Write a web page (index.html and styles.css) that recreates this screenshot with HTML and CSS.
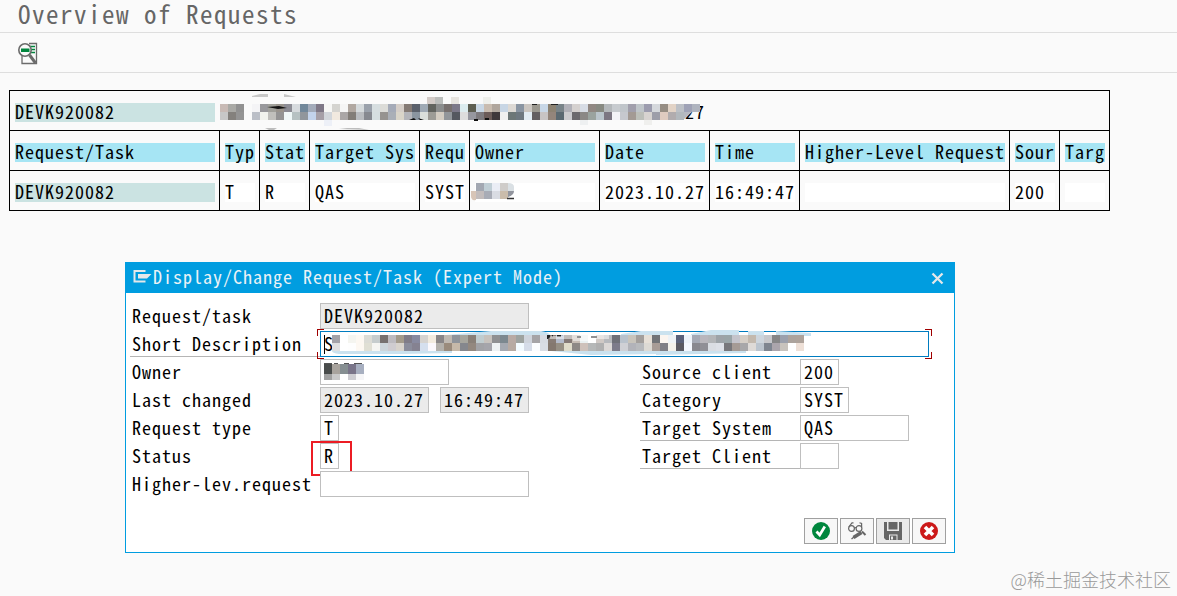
FILE: index.html
```html
<!DOCTYPE html>
<html lang="en">
<head>
    <meta charset="UTF-8">
    <meta name="viewport" content="width=device-width, initial-scale=1.0">
    <title>Overview of Requests</title>
    <link rel="stylesheet" href="styles.css">
</head>
<body>
    <header class="page-title">Overview of Requests</header>

    <div class="toolbar">
        <svg class="detail-icon" width="22" height="24" viewBox="0 0 22 24">
            <path d="M12 2.500H19.500V22.500H5V14" fill="none" stroke="#6b6b6b" stroke-width="1.300"/>
            <path d="M12 5.500h6M13 8.500h5M13 11.500h5" stroke="#00863d" stroke-width="1.700"/>
            <circle cx="8" cy="9" r="6.200" fill="#fafafa" stroke="#6b6b6b" stroke-width="1.600"/>
            <path d="M4 7.500h8.500v3.500H4z" fill="#00863d"/>
            <path d="M12.500 14L18.500 22" stroke="#6b6b6b" stroke-width="3"/>
        </svg>
    </div>

    <!-- Request list -->
    <div class="list">
        <div class="row summary">
            <div class="cell"><span class="key">DEVK920082</span></div>
            <div class="summary-text">
                <span class="tail">27</span>
                <svg class="mosaic" id="summaryMask" width="490" height="40"></svg>
            </div>
        </div>
        <div class="row head">
            <div class="cell"><span>Request/Task</span></div>
            <div class="cell"><span>Typ</span></div>
            <div class="cell"><span>Stat</span></div>
            <div class="cell"><span>Target Sys</span></div>
            <div class="cell"><span>Requ</span></div>
            <div class="cell"><span>Owner</span></div>
            <div class="cell"><span>Date</span></div>
            <div class="cell"><span>Time</span></div>
            <div class="cell"><span>Higher-Level Request</span></div>
            <div class="cell"><span>Sour</span></div>
            <div class="cell"><span>Targ</span></div>
        </div>
        <div class="row data">
            <div class="cell"><span class="key">DEVK920082</span></div>
            <div class="cell"><span>T</span></div>
            <div class="cell"><span>R</span></div>
            <div class="cell"><span>QAS</span></div>
            <div class="cell"><span>SYST</span></div>
            <div class="cell owner"><span></span><svg class="mosaic" id="ownerMask" width="50" height="20"></svg></div>
            <div class="cell"><span>2023.10.27</span></div>
            <div class="cell"><span>16:49:47</span></div>
            <div class="cell"><span></span></div>
            <div class="cell"><span>200</span></div>
            <div class="cell"><span></span></div>
        </div>
    </div>

    <!-- Popup -->
    <div class="dialog">
        <div class="dialog-title">
            <svg width="19" height="15" viewBox="0 0 19 15">
                <path d="M12.500 2H1.500V12.500H12.500" fill="none" stroke="#e4e8ea" stroke-width="2"/>
                <path d="M5 5H18.500L14 9.500H5z" fill="#e4e8ea"/>
            </svg>
            <span>Display/Change Request/Task (Expert Mode)</span>
            <svg class="close" width="13" height="13" viewBox="0 0 13 13">
                <path d="M1.500 1.500L11.500 11.500M11.500 1.500L1.500 11.500" stroke="#e4e8ea" stroke-width="2.300"/>
            </svg>
        </div>
        <div class="form">
            <div class="line">
                <label>Request/task</label>
                <div class="field readonly w20">DEVK920082</div>
            </div>
            <div class="line">
                <label class="underline">Short Description</label>
                <div class="field focus w60">S
                    <i class="corner tl"></i><i class="corner tr"></i>
                    <i class="corner bl"></i><i class="corner br"></i>
                    <svg class="mosaic" id="descMask" width="490" height="28"></svg>
                </div>
            </div>
            <div class="line">
                <label>Owner</label>
                <div class="field w12"><svg class="mosaic" id="userMask" width="50" height="24"></svg></div>
                <div class="right">
                    <label class="underline">Source client</label>
                    <div class="field w3">200</div>
                </div>
            </div>
            <div class="line">
                <label>Last changed</label>
                <div class="field readonly w10">2023.10.27</div>
                <div class="field readonly time w8">16:49:47</div>
                <div class="right">
                    <label class="underline">Category</label>
                    <div class="field w4">SYST</div>
                </div>
            </div>
            <div class="line">
                <label>Request type</label>
                <div class="field w1">T</div>
                <div class="right">
                    <label class="underline">Target System</label>
                    <div class="field w10">QAS</div>
                </div>
            </div>
            <div class="line">
                <label>Status</label>
                <div class="field w1 marked">R</div>
                <div class="right">
                    <label class="underline">Target Client</label>
                    <div class="field w3"></div>
                </div>
            </div>
            <div class="line">
                <label>Higher-lev.request</label>
                <div class="field w20"></div>
            </div>
        </div>
        <div class="buttons">
            <button>
                <svg width="20" height="20" viewBox="0 0 20 20">
                    <circle cx="10" cy="10" r="9" fill="#00863d"/>
                    <path d="M5.500 10.500L8.700 14L13.800 5.500" fill="none" stroke="#fff" stroke-width="2.700"/>
                </svg>
            </button>
            <button>
                <svg width="20" height="20" viewBox="0 0 20 20" fill="none" stroke="#666">
                    <circle cx="4.500" cy="7.500" r="2.900" stroke-width="1.200"/>
                    <circle cx="12" cy="7.500" r="2.900" stroke-width="1.200"/>
                    <path d="M7.300 7Q8.200 6 9.200 7M1.700 6L5 1.800H6.500M14.600 6V2.500L12.500 1.800" stroke-width="1.200"/>
                    <path d="M6.500 16.500L14.500 11.500" stroke-width="3.600"/>
                    <path d="M15 10.500L18.500 14" stroke-width="2"/>
                    <path d="M4.500 18L7 16" stroke-width="1.500"/>
                </svg>
            </button>
            <button class="disabled">
                <svg width="20" height="20" viewBox="0 0 20 20">
                    <path d="M1 1H19V19H3L1 17z" fill="#666"/>
                    <path d="M4 1H16V10H4z" fill="#eaeaea"/>
                    <path d="M5.500 1H14.500V8.500H5.500z" fill="#666"/>
                    <path d="M6 13.500H14.500V19H6z" fill="#eaeaea"/>
                    <path d="M7 14.500H13.500V19H7z" fill="#666"/>
                    <path d="M8 15.500H10V18.500H8z" fill="#eaeaea"/>
                </svg>
            </button>
            <button>
                <svg width="20" height="20" viewBox="0 0 20 20">
                    <circle cx="10" cy="10" r="9" fill="#cc1919"/>
                    <path d="M6 6L14 14M14 6L6 14" stroke="#fff" stroke-width="3.600"/>
                </svg>
            </button>
        </div>
    </div>

    <div class="watermark">@稀土掘金技术社区</div>

    <script src="mosaic.js"></script>
</body>
</html>
```
FILE: mosaic.js
```js
const SIZE = 8;

// rows: [x, y, "colour colour ..."], "-" leaves a gap
const draw = (id, rows, back = '', front = '') => {
    let out = back;
    rows.forEach(([x, y, colors, height = SIZE]) => {
        colors.trim().split(/\s+/).forEach((c, i) => {
            if (c === '-') return;
            out += `<rect x="${x + i * SIZE}" y="${y}" width="${SIZE}" height="${height}" fill="#${c}"/>`;
        });
    });
    document.getElementById(id).innerHTML = out + front;
};

draw('summaryMask', [
    [208, 7, 'd3cbc7 bbbdbb - e7e4df', 7],
    [264, 7, 'eeefeb', 7],
    [1, 14, `c8bab5 a9a9a5 919191 - f4f4f6 98989b a0a09a 98938c 8c8c94 d6dadd 71879a a3abba 7f7887 f7f7f5 d5d4d0
        f5f5f5 b1a8a1 d5dadc 9aa1ab d6dee0 dcdcd8 a5abb8 d5cec8 847a74 5a606b 9faab5 62645f 8b8d8d 77706e 7c7888
        dcecef 5d5e51 c9d7e5 c9bcb0 b0a69d c8d6e5 ddd9d4 8a95a2 cbc6c1 9b988f c8d7e7 8c8272 788388 b1b1b8 d5d1cf
        d7dce5 918883 888a82 b4b8bb c7cbcf c0c5ca a19fac bfc5c9 9c9cae d5d8dc 968d83 e2d3c6 bcc0c6 9fa2b6 afb4bf`],
    [1, 22, `c7c7c7 84817d 949494 - bbbfc7 f1f3ed c0c0bc 949494 f0f8f8 b6c1c2 91969c c3d3ec a69fa7 d2d6db f1e9df
        aaa6a6 827d78 b9bcc0 868990 d5dee0 969390 aaafb7 dad5c9 b4b5ba 8a95a0 dbe0dc 9d9c96 d4cdc2 92969a 55585f
        dddddd 96979f 7d7a7e 6b5b58 3e373a f0f0f0 6d7777 6e7880 e2ecf3 635e60 c8c4c4 93857b 5a6971 cccccf 6c6a6e
        8b8886 9aa39f bac5cc 7c7682 f3f3f7 c6c8ce a39a94 bcbfb9 d7d3d0 9d9ea9 dfcbc0 b1acae b2b8bd`],
    [105, 30, 'edf0f7', 6],
    [361, 30, 'eef0f1', 5],
    [425, 30, 'efefed', 5]
], '<path d="M457 22h16l-9 8h-7z" fill="#b6b9c2"/>',
`<path d="M33 6l8-2h8v3H33zM65 4l12 3H65z" fill="#c8c8c8"/>
 <path d="M48 17l12-1 8 2-9 1zM190 30l5-2 2 2zM199 28l6 2h-4zM255 29h4v2h-4zM266 28h4v2h-4z" fill="#111"/>
 <path d="M313 14h5v1h-5zM332 14h7v1h-7z" fill="#222"/>
 <path d="M46 38l12 0-3 2h-5zM120 39l8-1h12l10 2z" fill="#bdbdbd"/>`);

draw('ownerMask', [
    [6, 1, 'a3a8b2 c0ced5 eaedf5 cfccc9'],
    [6, 9, 'c2bcbc a8acb6 d9dce3 cabcab']
], '<path d="M1 9h5v9q-5 1-5-4z" fill="#d8c5b7"/><path d="M38 1q6 0 6 4v4h-6z" fill="#dae0e4"/>',
'<path d="M38 9h6q0 4-6 6z" fill="#92959e"/><path d="M37 16.500h7" stroke="#333" stroke-width="1.500"/>');

draw('descMask', [
    [11, 6, `a3a2a8 ffffff f5f5f0 fdf8f2 dcdcd6 c6cccd 77716f bdbbc0 a39b8c 807c88 888aa0 d6d3d0 f2ebdf 898688 bfb9b2
        8f949b a6a59d 898078 c0cccf c7c2bd 8f9092 7c888f b8aaa4 9ea3a0 cfd4dc a5a4a7 d7dbe2 877b74 b5bccc 857a77
        c7bdb5 eaf0f0 ffffff d0c9c5 b7b9bd 6f7078 b9c2cc c8c4bb a39f9c e7e0d7 727478 fbf5f0 eef2f6 5a617a eef3fa
        a5a9b5 b9b6bc b3b5b8 9da3a8 9aa5a8 c4c4cb d5cec6 c3b9ae cdd5dd c7c8cc 868687 9ba0ac aca39c aea39b`],
    [11, 14, `e0e0e0 ffffff fefefe fdf8f2 e0dfd4 f5f5f2 cdd5da cfccd0 d8d3cc 8b8d9c 858291 d5dfee fbf8fc b3b0ab 9a8b7c
        c6b9a9 85878d 93887f a2a3a7 a5a5ab eef2f3 a5a9b1 b7aaa2 f3fbff d5dce8 fbfdff d9dde4 84786f 979085 e0dcca
        8e8986 cec1ba b6b8b8 b0b0b0 dcd8d6 7d7b8a cfd0d5 b2b3b9 b8babd dddad4 a89c96 807f86 f3f0ea 5b5a63 f5f8ff
        89888f 908f96 dadde3 dde0e7 77777b a59b95 a8a7a9 dedad7 bbc4ce 7e8590 aba5ac c8c3bd ffffff eee0d7`]
], `<path d="M11 22h120v2l-50 1H18q-7-1-7-3zM125 6l45-4h50q8 1 10 5zM230 22h120l-10 3-70 1z" fill="#cbe2ef"/>
    <path d="M300 5l20-3h32v4h-52zM370 5l20-4h28v5h-48zM427 2h16v4h-16zM455 2l36 2v3h-36zM335 22h90v2l-90 2z" fill="#cbe2ef"/>`,
`<path d="M226 6h3v4h-3zM231 6h1v2h-1zM236 6h4v2h-4zM256 7h4v2h-4zM270 7h6v2h-6z" fill="#222"/>
 <path d="M227 10h25v-5h-10v2h-12zM252 6h36v4h-12l-6 2h-18z" fill="#fff" opacity="0.500"/>`);

draw('userMask', [
    [3, 5, '494c4b a8a39d 868f92 797489 a7afc0', 10],
    [3, 15, 'a0a0a0 c8c8c8 ffffff cdcdd2 f5f5f7', 6]
], '', '<path d="M3 4h8v1H3zM13 4h4v1h-4zM23 4h5v1h-5zM33 4h8v1h-8z" fill="#555"/>');
```
FILE: styles.css
```css
* {
    box-sizing: border-box;
}

body {
    margin: 0;
    height: 596px;
    overflow: hidden;
    background-color: #fafafa;
    color: #000;
    font-family: "Noto Sans CJK SC", "Liberation Mono", monospace;
    font-feature-settings: "hwid"; /* fixed pitch latin */
    font-size: 18px;
    letter-spacing: 1px;
    line-height: 17px;
    white-space: nowrap;
}

.page-title {
    height: 33px;
    padding-left: 18px;
    border-bottom: 1px solid #dedede;
    color: #666;
    font-size: 25px;
    letter-spacing: 1.5px;
    line-height: 27px;
}

.toolbar {
    height: 40px;
    padding: 8px 0 0 17px;
    border-bottom: 1px solid #dedede;
}

.detail-icon,
.mosaic {
    display: block;
}

/* Request list */
.list {
    width: 1101px;
    margin: 17px 0 0 9px;
    border: 1px solid #000;
    border-top: none;
    border-left: none;
}

.row {
    display: grid;
    grid-template-columns: 210px 40px 50px 110px 50px 130px 110px 90px 210px 50px 50px;
    height: 40px;
}

.cell {
    padding: 12px 4px 0 5px;
    border-top: 1px solid #000;
    border-left: 1px solid #000;
}

.cell span {
    display: block;
    height: 19px;
    background-color: #fff;
}

.cell .key {
    background-color: #cbe3e2;
}

.head .cell span {
    background-color: #a6e5f4;
}

.summary .cell {
    border-right: none;
}

.summary-text {
    grid-column: 2 / -1;
    position: relative;
    border-top: 1px solid #000;
}

.tail {
    position: absolute;
    top: 12px;
    left: 466px;
}

.summary-text .mosaic {
    position: absolute;
    top: -1px;
    left: 0;
}

.owner {
    position: relative;
}

.owner .mosaic {
    position: absolute;
    top: 11px;
    left: 0;
}

/* Popup */
.dialog {
    width: 830px;
    height: 291px;
    margin: 51px 0 0 125px;
    border: 1px solid #009de0;
    background-color: #fff;
}

.dialog-title {
    display: flex;
    align-items: center;
    height: 30px;
    padding: 0 10px 3px 7px;
    background-color: #009de0;
    color: #eaf2f6;
}

.dialog-title span {
    margin-left: 1px;
}

.dialog-title .close {
    margin: 3px 0 0 auto;
}

.form {
    display: flex;
    flex-direction: column;
    gap: 2px;
    padding: 10px 0 0 4px;
}

.line {
    display: flex;
    position: relative;
    height: 26px;
}

.line label {
    width: 190px;
    padding: 4px 0 0 2px;
}

.line .underline {
    border-bottom: 1px solid #b5b5b5;
}

.right {
    display: flex;
    position: absolute;
    left: 510px;
    height: 26px;
}

.right label {
    width: 160px;
}

.field {
    position: relative;
    height: 26px;
    padding: 3px 0 0 3px;
    border: 1px solid #bfbfbf;
    background-color: #fff;
}

.readonly {
    background-color: #ebebeb;
}

.time {
    margin-left: 11px;
}

.w1 { width: 19px; }
.w3 { width: 39px; }
.w4 { width: 49px; }
.w8 { width: 89px; }
.w10 { width: 109px; }
.w12 { width: 129px; }
.w20 { width: 209px; }
.w60 { width: 609px; }

.field .mosaic {
    position: absolute;
    top: -1px;
    left: 0;
}

.focus {
    border-color: #007cc0;
}

.focus .mosaic {
    top: -3px;
}

.focus::before {
    content: "";
    position: absolute;
    top: 3px;
    left: 3px;
    width: 1px;
    height: 19px;
    background-color: #000;
}

.corner {
    position: absolute;
    width: 7px;
    height: 7px;
    border: 0 solid #a00000;
}

.tl { top: -3px; left: -4px; border-width: 1px 0 0 1px; }
.tr { top: -3px; right: -4px; border-width: 1px 1px 0 0; }
.bl { bottom: -3px; left: -4px; border-width: 0 0 1px 1px; }
.br { bottom: -3px; right: -4px; border-width: 0 1px 1px 0; }

/* Red frame around the status value */
.marked::after {
    content: "";
    position: absolute;
    top: -3px;
    left: -10px;
    width: 37px;
    height: 31px;
    border: 2px solid #ec1c24;
}

.buttons {
    display: flex;
    justify-content: flex-end;
    gap: 2px;
    padding: 21px 8px 0 0;
}

.buttons button {
    display: flex;
    align-items: center;
    justify-content: center;
    width: 34px;
    height: 26px;
    padding: 0;
    border: 1px solid #a0a0a0;
    background-color: #f7f7f7;
}

.buttons .disabled {
    background-color: #eaeaea;
}

.watermark {
    position: absolute;
    right: 6px;
    bottom: 7px;
    color: #999;
    font-feature-settings: normal;
    font-weight: 300;
    letter-spacing: 0;
    line-height: 20px;
}
```
